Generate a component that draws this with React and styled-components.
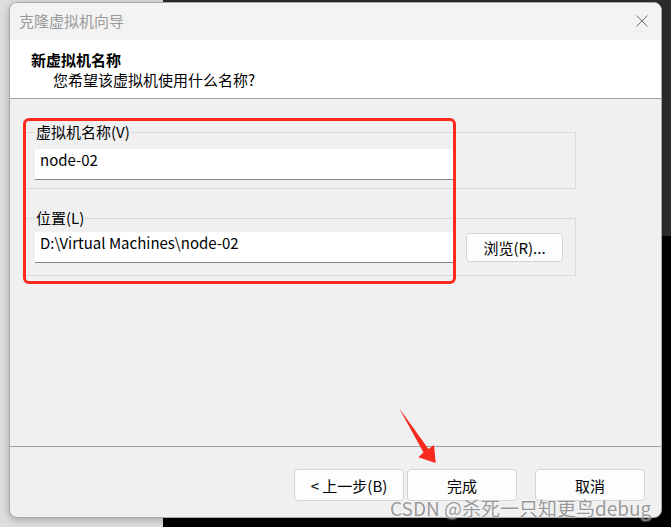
import React from 'react';
import styled, { createGlobalStyle } from 'styled-components';

const Global = createGlobalStyle`
  html, body {
    margin: 0;
    padding: 0;
    background: #000;
  }
  body {
    font-family: "Noto Sans CJK SC", "Noto Sans", sans-serif;
  }
`;

const Desktop = styled.div`
  position: relative;
  width: 671px;
  height: 527px;
  overflow: hidden;
  padding: 2px 0 0 9px;
  box-sizing: border-box;
  background:
    linear-gradient(to right, #dedede 0 163px, transparent 163px),
    linear-gradient(to bottom, #2c2c2c 0 236px, #000 236px);
`;

const Dialog = styled.div`
  position: relative;
  width: 653px;
  height: 516px;
  box-sizing: border-box;
  border: 1px solid #a8a8a8;
  border-radius: 8px;
  overflow: hidden;
  display: flex;
  flex-direction: column;
  background: #f0f0f0;
  box-shadow: 0 2px 8px rgba(0, 0, 0, 0.25);
`;

const TitleBar = styled.div`
  height: 35px;
  flex: none;
  display: flex;
  align-items: center;
  justify-content: space-between;
  padding: 0 13px 2px 9px;
  background: #f3f3f3;
`;

const Title = styled.span`
  font-size: 15px;
  color: #9a9a9a;
`;

const Header = styled.div`
  flex: none;
  background: #fff;
  border-bottom: 1px solid #a0a0a0;
  padding: 10px 0 0 21px;
  height: 48px;
  display: flex;
  flex-direction: column;
`;

const HeaderTitle = styled.div`
  font-size: 15px;
  font-weight: 700;
  line-height: 20px;
  color: #000;
`;

const HeaderSub = styled.div`
  font-size: 15px;
  line-height: 20px;
  color: #000;
  padding-left: 22px;
`;

const Body = styled.div`
  flex: 1;
  background: #f0f0f0;
  border-bottom: 1px solid #a0a0a0;
  padding: 23px 0 0 14px;
  display: flex;
  flex-direction: column;
  gap: 19px;
`;

const Group = styled.fieldset`
  margin: 0;
  min-width: 0;
  width: 552px;
  box-sizing: border-box;
  border: 1px solid #dadada;
  padding: 0 0 ${p => p.$pb}px 10px;
`;

const Legend = styled.legend`
  padding: 0 1px;
  font-size: 15px;
  line-height: 20px;
  color: #000;
`;

const Row = styled.div`
  display: flex;
  align-items: center;
  gap: 13px;
  margin-top: ${p => p.$mt}px;
`;

const Field = styled.div`
  width: 418px;
  height: 31px;
  box-sizing: border-box;
  background: #fff;
  border-bottom: 1px solid #868686;
  padding: 1px 0 0 5px;
  font-size: 15px;
  line-height: 20px;
  color: #000;
`;

const Button = styled.div`
  width: ${p => p.$w}px;
  height: ${p => p.$h}px;
  box-sizing: border-box;
  background: #fdfdfd;
  border: 1px solid #d4d4d4;
  border-radius: 4px;
  display: flex;
  align-items: center;
  justify-content: center;
  font-size: 15px;
  color: #000;
`;

const Footer = styled.div`
  height: 70px;
  flex: none;
  box-sizing: border-box;
  padding: 22px 16px 0 0;
  display: flex;
  justify-content: flex-end;
  align-items: flex-start;
`;

const ButtonGroup = styled.div`
  display: flex;
  gap: 3px;
  margin-right: 18px;
`;

const RedBox = styled.div`
  position: absolute;
  left: 13px;
  top: 115px;
  width: 433px;
  height: 166px;
  box-sizing: border-box;
  border: 3px solid #fb2a1c;
  border-radius: 6px;
  pointer-events: none;
`;

const Overlay = styled.svg`
  position: absolute;
  left: 0;
  top: 0;
  pointer-events: none;
`;

const Watermark = styled.div`
  position: absolute;
  left: 390px;
  top: 496px;
  font-size: 19px;
  line-height: 24px;
  color: rgba(120, 120, 120, 0.75);
  text-shadow: 0 0 2px rgba(255, 255, 255, 0.9);
  white-space: nowrap;
`;

function CloseIcon() {
  return (
    <svg width="12" height="12" viewBox="0 0 12 12">
      <path d="M0.5 0.5 L11.5 11.5 M11.5 0.5 L0.5 11.5" stroke="#6f6f6f" strokeWidth="1" fill="none" />
    </svg>
  );
}

export default function App() {
  return (
    <>
      <Global />
      <Desktop>
        <Dialog>
          <TitleBar>
            <Title>克隆虚拟机向导</Title>
            <CloseIcon />
          </TitleBar>
          <Header>
            <HeaderTitle>新虚拟机名称</HeaderTitle>
            <HeaderSub>您希望该虚拟机使用什么名称?</HeaderSub>
          </Header>
          <Body>
            <Group $pb={8}>
              <Legend>虚拟机名称(V)</Legend>
              <Row $mt={7}>
                <Field>node-02</Field>
              </Row>
            </Group>
            <Group $pb={12}>
              <Legend>位置(L)</Legend>
              <Row $mt={4}>
                <Field>D:\Virtual Machines\node-02</Field>
                <Button $w={97} $h={29}>浏览(R)...</Button>
              </Row>
            </Group>
          </Body>
          <Footer>
            <ButtonGroup>
              <Button $w={110} $h={32}>&lt; 上一步(B)</Button>
              <Button $w={110} $h={32}>完成</Button>
            </ButtonGroup>
            <Button $w={110} $h={32}>取消</Button>
          </Footer>
          <RedBox />
        </Dialog>
        <Overlay width="671" height="527" viewBox="0 0 671 527">
          <polygon
            points="399,408 428.5,449 434,445 435.7,463 418.3,457.3 423.5,452.5"
            fill="#f52a1c"
          />
        </Overlay>
        <Watermark>CSDN @杀死一只知更鸟debug</Watermark>
      </Desktop>
    </>
  );
}
